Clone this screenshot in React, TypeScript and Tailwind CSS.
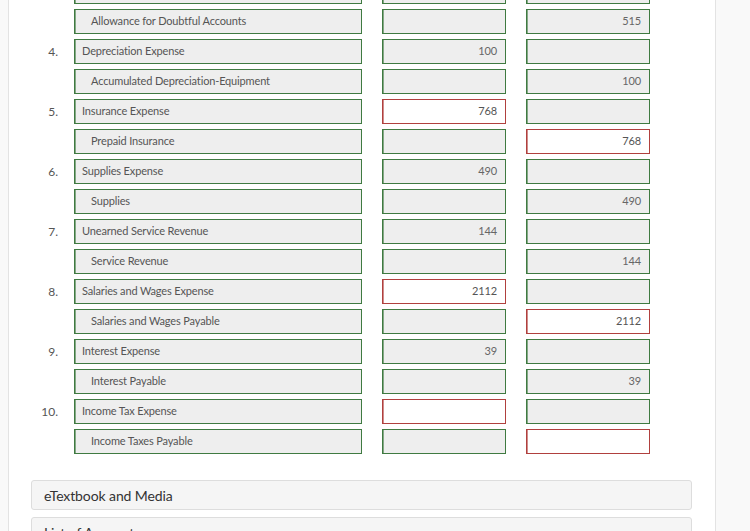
import React from 'react'

type Cell = { value?: string; error?: boolean }
type Row = { num?: string; account: string; credit?: boolean; dr: Cell; cr: Cell }

// first row sits mostly above the fold, so its contents aren't shown
const rows: Row[] = [
  { account: '', dr: {}, cr: {} },
  { account: 'Allowance for Doubtful Accounts', credit: true, dr: {}, cr: { value: '515' } },
  { num: '4.', account: 'Depreciation Expense', dr: { value: '100' }, cr: {} },
  { account: 'Accumulated Depreciation-Equipment', credit: true, dr: {}, cr: { value: '100' } },
  { num: '5.', account: 'Insurance Expense', dr: { value: '768', error: true }, cr: {} },
  { account: 'Prepaid Insurance', credit: true, dr: {}, cr: { value: '768', error: true } },
  { num: '6.', account: 'Supplies Expense', dr: { value: '490' }, cr: {} },
  { account: 'Supplies', credit: true, dr: {}, cr: { value: '490' } },
  { num: '7.', account: 'Unearned Service Revenue', dr: { value: '144' }, cr: {} },
  { account: 'Service Revenue', credit: true, dr: {}, cr: { value: '144' } },
  { num: '8.', account: 'Salaries and Wages Expense', dr: { value: '2112', error: true }, cr: {} },
  { account: 'Salaries and Wages Payable', credit: true, dr: {}, cr: { value: '2112', error: true } },
  { num: '9.', account: 'Interest Expense', dr: { value: '39' }, cr: {} },
  { account: 'Interest Payable', credit: true, dr: {}, cr: { value: '39' } },
  { num: '10.', account: 'Income Tax Expense', dr: { error: true }, cr: {} },
  { account: 'Income Taxes Payable', credit: true, dr: {}, cr: { error: true } },
]

const AmountBox = ({ cell }: { cell: Cell }) => (
  <div
    className={
      cell.error
        ? 'w-[124px] h-[25px] flex items-center justify-end pr-2 bg-white border border-[#b0403e] shadow-[inset_1px_0_0_rgba(176,64,62,0.6)] text-[11px] tracking-[-0.1px] text-[#555]'
        : 'w-[124px] h-[25px] flex items-center justify-end pr-2 bg-[#eeeeee] border border-[#3f7a41] shadow-[inset_1px_0_0_rgba(63,122,65,0.6)] text-[11px] tracking-[-0.1px] text-[#666]'
    }
  >
    {cell.value}
  </div>
)

export default function App() {
  return (
    <div className="w-[750px] h-[531px] overflow-hidden bg-[#f9f9f9] flex font-['Lato','Liberation_Sans',sans-serif]">
      <div className="ml-[8px] w-[708px] h-full bg-white border-x border-[#e3e3e3] flex flex-col">
        <div className="mt-[-21px] flex flex-col gap-[5px]">
          {rows.map((r, i) => (
            <div key={i} className="flex items-center h-[25px]">
              <div className="w-[49px] text-right text-[12px] text-[#555]">{r.num}</div>
              <div
                className={
                  'ml-[16px] w-[288px] h-[25px] flex items-center bg-[#eeeeee] border border-[#3f7a41] shadow-[inset_1px_0_0_rgba(63,122,65,0.6)] text-[11px] tracking-[-0.15px] text-[#555] ' +
                  (r.credit ? 'pl-[16px]' : 'pl-[7px]')
                }
              >
                {r.account}
              </div>
              <div className="ml-[20px]">
                <AmountBox cell={r.dr} />
              </div>
              <div className="ml-[20px]">
                <AmountBox cell={r.cr} />
              </div>
            </div>
          ))}
        </div>
        <div className="mt-[26px] ml-[22px] mr-[23px] flex flex-col gap-[7px]">
          <div className="h-[30px] bg-[#f5f5f5] border border-[#dddddd] rounded-[3px] flex items-center px-3 text-[14px] tracking-[-0.1px] text-[#333]">
            eTextbook and Media
          </div>
          <div className="h-[30px] bg-[#f5f5f5] border border-[#dddddd] rounded-[3px] flex items-center px-3 text-[14px] tracking-[-0.1px] text-[#333]">
            List of Accounts
          </div>
        </div>
      </div>
    </div>
  )
}
